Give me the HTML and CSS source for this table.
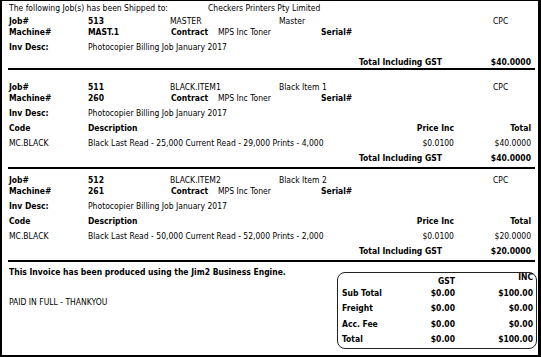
FILE: index.html
```html
<!DOCTYPE html>
<html>
<head>
<meta charset="utf-8">
<title>Shipped Jobs</title>
<link rel="stylesheet" href="styles.css">
</head>
<body>
<div class="page">
  <section class="sec sec1">
    <div class="r hdr"><span class="w-ship">The following Job(s) has been Shipped to:</span><span>Checkers Printers Pty Limited</span></div>
    <div class="pair">
      <div class="r"><span class="c1 b">Job#</span><span class="c2 b">513</span><span class="c3">MASTER</span><span class="c4">Master</span><span>CPC</span></div>
      <div class="r"><span class="c1 b">Machine#</span><span class="c2 b">MAST.1</span><span class="ctr b">Contract</span><span class="mps">MPS Inc Toner</span><span class="b">Serial#</span></div>
    </div>
    <div class="r"><span class="c1 b">Inv Desc:</span><span>Photocopier Billing Job January 2017</span></div>
    <div class="r"><span class="fill"></span><span class="tl b">Total Including GST</span><span class="amt b">$40.0000</span></div>
  </section>

  <section class="sec sec2">
    <div class="pair">
      <div class="r"><span class="c1 b">Job#</span><span class="c2 b">511</span><span class="c3">BLACK.ITEM1</span><span class="c4">Black Item 1</span><span>CPC</span></div>
      <div class="r"><span class="c1 b">Machine#</span><span class="c2 b">260</span><span class="ctr b">Contract</span><span class="mps">MPS Inc Toner</span><span class="b">Serial#</span></div>
    </div>
    <div class="r"><span class="c1 b">Inv Desc:</span><span>Photocopier Billing Job January 2017</span></div>
    <div class="r"><span class="c1 b">Code</span><span class="fill b">Description</span><span class="price b">Price Inc</span><span class="amt b">Total</span></div>
    <div class="r"><span class="c1">MC.BLACK</span><span class="fill">Black Last Read - 25,000 Current Read - 29,000 Prints - 4,000</span><span class="price">$0.0100</span><span class="amt">$40.0000</span></div>
    <div class="r"><span class="fill"></span><span class="tl b">Total Including GST</span><span class="amt b">$40.0000</span></div>
  </section>

  <section class="sec sec3">
    <div class="pair">
      <div class="r"><span class="c1 b">Job#</span><span class="c2 b">512</span><span class="c3">BLACK.ITEM2</span><span class="c4">Black Item 2</span><span>CPC</span></div>
      <div class="r"><span class="c1 b">Machine#</span><span class="c2 b">261</span><span class="ctr b">Contract</span><span class="mps">MPS Inc Toner</span><span class="b">Serial#</span></div>
    </div>
    <div class="r"><span class="c1 b">Inv Desc:</span><span>Photocopier Billing Job January 2017</span></div>
    <div class="r"><span class="c1 b">Code</span><span class="fill b">Description</span><span class="price b">Price Inc</span><span class="amt b">Total</span></div>
    <div class="r"><span class="c1">MC.BLACK</span><span class="fill">Black Last Read - 50,000 Current Read - 52,000 Prints - 2,000</span><span class="price">$0.0100</span><span class="amt">$20.0000</span></div>
    <div class="r"><span class="fill"></span><span class="tl b">Total Including GST</span><span class="amt b">$20.0000</span></div>
  </section>

  <section class="foot">
    <div class="notes">
      <div class="r b">This Invoice has been produced using the Jim2 Business Engine.</div>
      <div class="r paid">PAID IN FULL - THANKYOU</div>
    </div>
    <div class="totals">
      <div class="th"><span class="bl"></span><span class="bg gsth">GST</span><span class="bi">INC</span></div>
      <div class="r"><span class="bl">Sub Total</span><span class="bg">$0.00</span><span class="bi">$100.00</span></div>
      <div class="r"><span class="bl">Freight</span><span class="bg">$0.00</span><span class="bi">$0.00</span></div>
      <div class="r"><span class="bl">Acc. Fee</span><span class="bg">$0.00</span><span class="bi">$0.00</span></div>
      <div class="r"><span class="bl">Total</span><span class="bg">$0.00</span><span class="bi">$100.00</span></div>
    </div>
  </section>
</div>
</body>
</html>
```
FILE: styles.css
```css
* { box-sizing: border-box; }
html, body { margin: 0; padding: 0; background: #fff; }
body {
  font-family: "DejaVu Sans Condensed", "DejaVu Sans", sans-serif;
  font-size: 8.5px;
  color: #000;
}
.page {
  width: 541px;
  height: 357px;
  border-style: solid;
  border-color: #000;
  border-width: 1px 3px 2px 2px;
  overflow: hidden;
}
.b { font-weight: bold; }
.r { display: flex; line-height: 11px; height: 11px; white-space: nowrap; }
.sec {
  display: flex;
  flex-direction: column;
  gap: 4px;
  margin: 0 3px 0 6px;
  padding-left: 1px;
  padding-right: 4px;
  border-bottom: 2px solid #000;
}
.sec1 { padding-top: 2px; padding-bottom: 0; }
.sec2 { padding-top: 12px; padding-bottom: 3px; }
.sec3 { padding-top: 6px; padding-bottom: 3px; }
.hdr { margin-bottom: -2px; }
.w-ship { width: 199px; }
.c1 { width: 79px; }
.c2 { width: 82px; }
.c3 { width: 109px; }
.c4 { width: 214px; }
.ctr { width: 47px; margin-left: 1px; }
.mps { width: 103px; }
.fill { flex: 1; }
.tl { width: 100px; }
.amt { width: 77px; text-align: right; }
.price { width: 100px; text-align: right; }
.sec .r .tl + .amt { width: 72px; }

.foot {
  display: flex;
  padding-left: 7px;
  padding-right: 1px;
}
.notes { flex: 1; padding-top: 4.5px; }
.paid { margin-top: 19.5px; }
.totals {
  width: 200px;
  height: 77px;
  margin-top: 10px;
  border: 1px solid #222;
  border-radius: 8px;
  padding: 0 3px 0 4px;
  font-weight: bold;
}
.th { display: flex; height: 14.5px; line-height: 9px; }
.gsth { padding-top: 3.5px; }
.totals .r + .r { margin-top: 4.5px; }
.bl { width: 74px; }
.bg { width: 39px; text-align: right; }
.bi { flex: 1; text-align: right; }
```
